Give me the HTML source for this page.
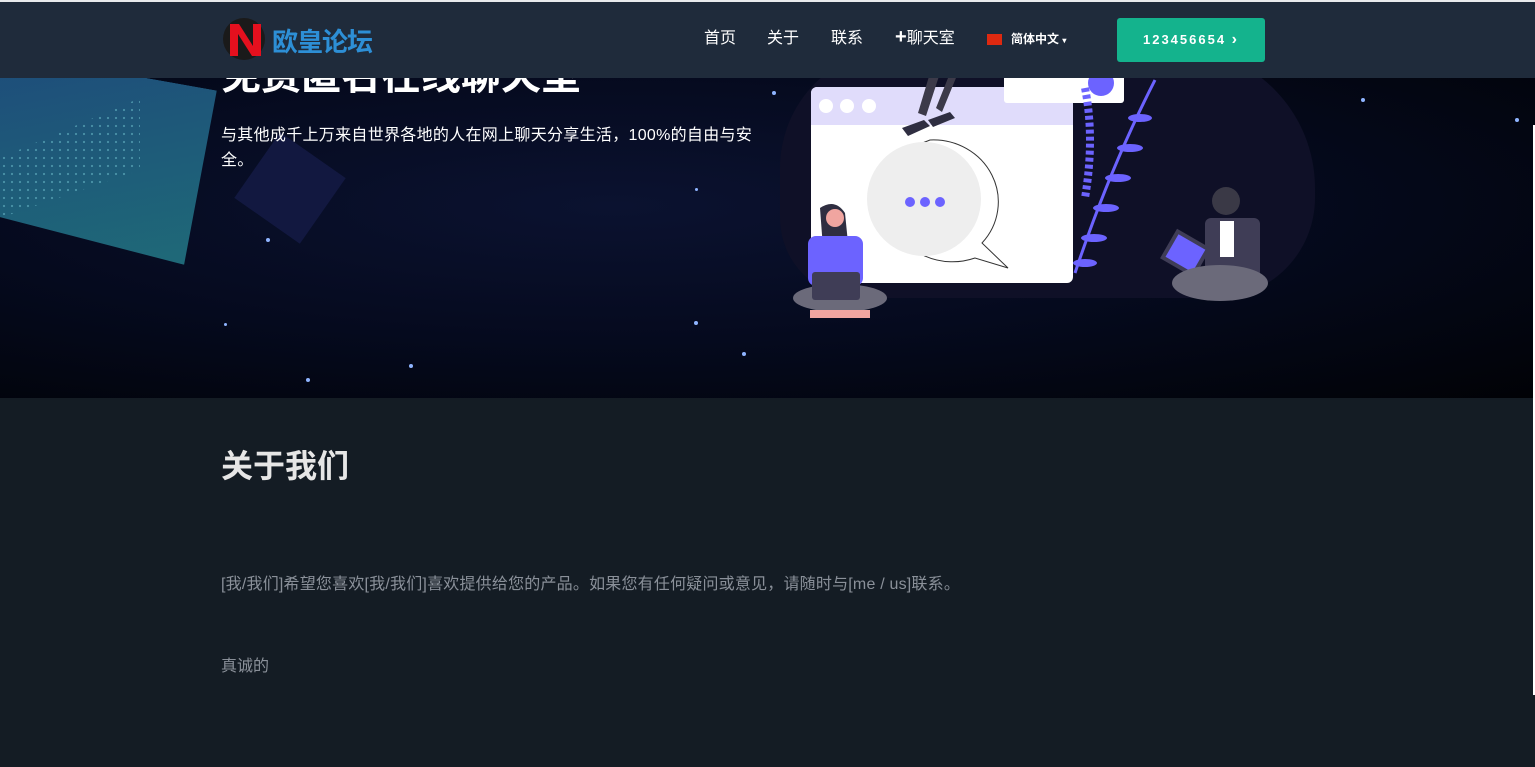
<!DOCTYPE html>
<html><head><meta charset="utf-8"><style>
*{margin:0;padding:0;box-sizing:border-box}
body{width:1535px;height:767px;overflow:hidden;background:#141c24;font-family:"Liberation Sans","Noto Sans CJK SC",sans-serif;position:relative}
.top{position:absolute;left:0;top:0;width:1535px;height:2px;background:#e8eaec}
.nav{position:absolute;left:0;top:2px;width:1535px;height:76px;background:#1f2b3b;z-index:5}
.hero{position:absolute;left:0;top:78px;width:1535px;height:320px;background:radial-gradient(ellipse at 40% 40%,#0b1230 0%,#050a1e 50%,#010206 100%);overflow:hidden}
.nav a{position:absolute;color:#fff;font-size:16px;top:22px}
.btn{position:absolute;left:1117px;top:16px;width:148px;height:44px;background:#14b38d;border-radius:3px;color:#fff;font-size:13px;letter-spacing:2px;text-align:center;line-height:44px;font-weight:bold}
.dot{position:absolute;width:4px;height:4px;border-radius:2px;background:#8fb4ff}
</style></head><body>
<div class="top"></div>
<div class="nav">
  <svg style="position:absolute;left:222px;top:14px" width="48" height="48" viewBox="0 0 48 48"><circle cx="22" cy="23" r="21" fill="#1a1a1a"/><path d="M8 8h9l14 22V8h8v32h-9L16 18v22H8z" fill="#e5101e"/></svg>
  <div style="position:absolute;left:272px;top:20px;color:#2d8fd6;font-size:26px;font-weight:bold;letter-spacing:-1px">欧皇论坛</div>
  <a style="left:704px">首页</a><a style="left:767px">关于</a><a style="left:831px">联系</a>
  <a style="left:895px;font-weight:normal"><b style="font-size:20px;line-height:16px">+</b>聊天室</a>
  <div style="position:absolute;left:987px;top:32px;width:15px;height:11px;background:#de2910"></div>
  <div style="position:absolute;left:1011px;top:28px;color:#fff;font-size:12px;font-weight:bold">简体中文 <span style="font-size:8px">▾</span></div>
  <div class="btn">123456654 <span style="font-size:16px">›</span></div>
</div>
<div class="hero">
  <div style="position:absolute;left:-40px;top:-10px;width:260px;height:180px;background:linear-gradient(160deg,#1d4a7a,#1f6b78);transform:skewY(12deg) rotate(-2deg);clip-path:polygon(0 0,100% 0,85% 100%,0 90%)"></div>
  <div style="position:absolute;left:0;top:20px;width:140px;height:120px;background-image:radial-gradient(#5aa6b8 1px,transparent 1.3px);background-size:8px 8px;opacity:.7;clip-path:polygon(100% 0,100% 60%,0 100%,0 50%)"></div>
  <div style="position:absolute;left:250px;top:70px;width:80px;height:80px;background:#121840;transform:rotate(35deg)"></div>
  <div style="position:absolute;left:221px;top:-35px;color:#fff;font-size:40px;font-weight:bold">免费匿名在线聊天室</div>
  <div style="position:absolute;left:221px;top:45px;width:540px;color:#fff;font-size:16px;line-height:25px;letter-spacing:0.3px">与其他成千上万来自世界各地的人在网上聊天分享生活，100%的自由与安全。</div>
  <div class="dot" style="left:266px;top:160px"></div><div class="dot" style="left:224px;top:245px;width:3px;height:3px"></div>
  <div class="dot" style="left:694px;top:243px"></div><div class="dot" style="left:742px;top:274px"></div>
  <div class="dot" style="left:409px;top:286px"></div><div class="dot" style="left:306px;top:300px"></div>
  <div class="dot" style="left:695px;top:110px;width:3px;height:3px"></div><div class="dot" style="left:772px;top:13px"></div>
  <div class="dot" style="left:1236px;top:23px"></div><div class="dot" style="left:1361px;top:20px"></div><div class="dot" style="left:1515px;top:40px"></div>
  <div style="position:absolute;left:780px;top:-30px;width:535px;height:250px;background:#0f1027;border-radius:120px 140px 100px 80px"></div>
  <div style="position:absolute;left:811px;top:9px;width:262px;height:196px;background:#fff;border-radius:6px;overflow:hidden"><div style="height:38px;background:#e0dcfb"></div>
    <div style="position:absolute;left:8px;top:12px;width:14px;height:14px;border-radius:7px;background:#fff"></div><div style="position:absolute;left:29px;top:12px;width:14px;height:14px;border-radius:7px;background:#fff"></div><div style="position:absolute;left:51px;top:12px;width:14px;height:14px;border-radius:7px;background:#fff"></div></div>
  <div style="position:absolute;left:1004px;top:-5px;width:120px;height:30px;background:#fff;border-radius:3px"></div>
  <div style="position:absolute;left:1088px;top:-8px;width:26px;height:26px;border-radius:13px;background:#6c63ff"></div>
  <svg style="position:absolute;left:860px;top:55px" width="160" height="140"><path d="M70 7a65 62 0 1 0 45 118l33 10-26-25A65 62 0 0 0 70 7z" fill="#fff" stroke="#333"/><circle cx="64" cy="66" r="57" fill="#eee"/><circle cx="50" cy="69" r="5" fill="#6c63ff"/><circle cx="65" cy="69" r="5" fill="#6c63ff"/><circle cx="80" cy="69" r="5" fill="#6c63ff"/></svg>
  <svg style="position:absolute;left:900px;top:-5px" width="100" height="70"><path d="M30 0l-12 40 8 3 14-43zM50 0l-14 35 6 4 16-39z" fill="#3c3a49"/><path d="M2 55l22-8 6 6-22 10zM28 47l22-8 5 6-22 9z" fill="#2f2e41"/></svg>
  <svg style="position:absolute;left:1070px;top:0" width="100" height="200"><path d="M85 2Q40 90 5 195" stroke="#6c63ff" stroke-width="3" fill="none"/><g fill="#6c63ff"><ellipse cx="70" cy="40" rx="12" ry="4"/><ellipse cx="60" cy="70" rx="13" ry="4"/><ellipse cx="48" cy="100" rx="13" ry="4"/><ellipse cx="36" cy="130" rx="13" ry="4"/><ellipse cx="24" cy="160" rx="13" ry="4"/><ellipse cx="15" cy="185" rx="12" ry="4"/></g><path d="M15 10Q25 60 15 120" stroke="#6c63ff" stroke-width="8" fill="none" stroke-dasharray="4 3"/></svg>
  <svg style="position:absolute;left:790px;top:120px" width="100" height="125"><path d="M30 10q15-10 25 5l3 30-25 5z" fill="#2f2e41"/><circle cx="45" cy="20" r="9" fill="#f0a5a0"/><rect x="18" y="38" width="55" height="50" rx="8" fill="#6c63ff"/><ellipse cx="50" cy="100" rx="47" ry="14" fill="#6b6a7a"/><rect x="22" y="74" width="48" height="28" rx="3" fill="#3f3d56"/><rect x="20" y="112" width="60" height="8" fill="#f0a5a0"/></svg>
  <svg style="position:absolute;left:1160px;top:105px" width="120" height="130"><circle cx="66" cy="18" r="14" fill="#3a3946"/><rect x="45" y="35" width="55" height="60" rx="6" fill="#3f3d56"/><rect x="60" y="38" width="14" height="36" fill="#fff"/><rect x="8" y="55" width="35" height="30" fill="#6c63ff" stroke="#3f3d56" stroke-width="4" transform="rotate(30 25 70)"/><ellipse cx="60" cy="100" rx="48" ry="18" fill="#6b6a7a"/></svg>
</div>
<div style="position:absolute;left:1533px;top:125px;width:2px;height:570px;background:#fff"></div>
<div style="position:absolute;left:221px;top:441px;color:#e6e6e6;font-size:32px;font-weight:bold">关于我们</div>
<div style="position:absolute;left:221px;top:570px;color:#8a9099;font-size:16px;letter-spacing:0.2px">[我/我们]希望您喜欢[我/我们]喜欢提供给您的产品。如果您有任何疑问或意见，请随时与[me / us]联系。</div>
<div style="position:absolute;left:221px;top:652px;color:#8a9099;font-size:16px">真诚的</div>
</body></html>
